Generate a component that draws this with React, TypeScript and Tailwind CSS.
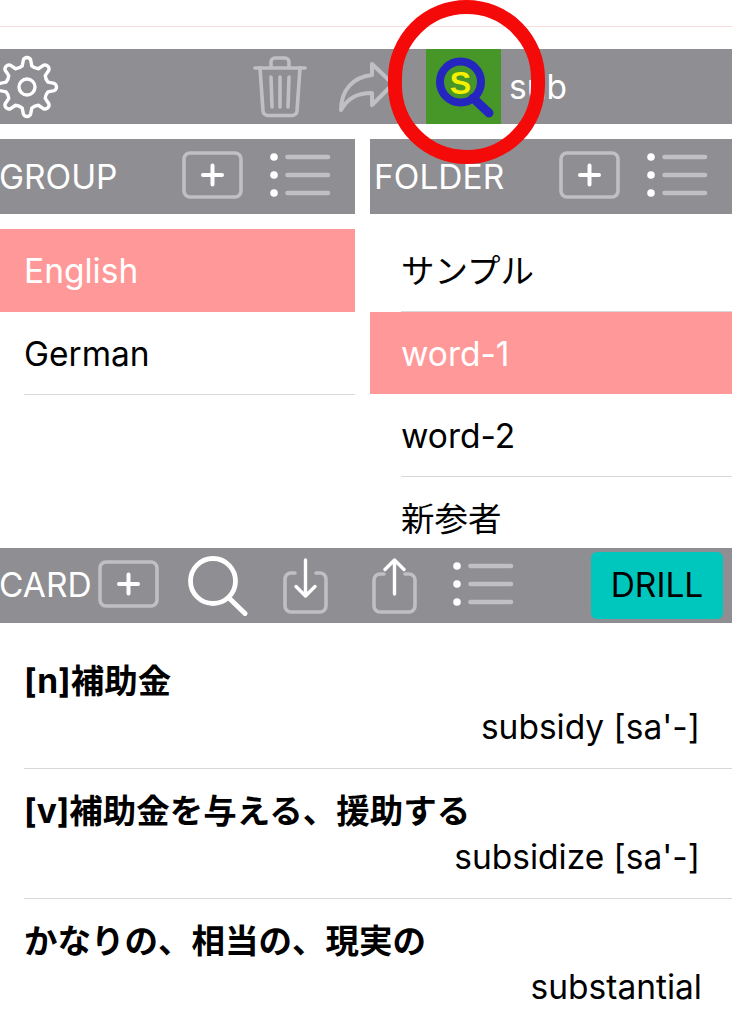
import React from "react";

const FONT = "font-['Inter','Noto_Sans_CJK_JP',sans-serif]";

function PlusBox() {
  return (
    <svg width="62" height="48" viewBox="0 0 62 48" fill="none" className="block shrink-0 -mt-[3px]">
      <rect x="2" y="2" width="57" height="44" rx="6" stroke="#c0c0c4" strokeWidth="3.6" />
      <path d="M30.5 14.5v19M21 24h19" stroke="#fff" strokeWidth="4" strokeLinecap="round" />
    </svg>
  );
}

function ListIcon() {
  return (
    <svg width="64" height="48" viewBox="0 0 64 48" fill="none" className="block shrink-0 -mt-[3px]">
      <circle cx="6" cy="6" r="3.8" fill="#fff" />
      <circle cx="6" cy="24" r="3.8" fill="#fff" />
      <circle cx="6" cy="42" r="3.8" fill="#fff" />
      <path d="M19.500 6h40.500M19.500 24h40.500M19.500 42h40.500" stroke="#c0c0c4" strokeWidth="4.6" strokeLinecap="round" />
    </svg>
  );
}

function gearPath() {
  const pt = (r: number, deg: number) => {
    const a = ((deg - 90) * Math.PI) / 180;
    return `${(r * Math.cos(a)).toFixed(2)} ${(r * Math.sin(a)).toFixed(2)}`;
  };
  let d = "";
  for (let i = 0; i < 8; i++) {
    const a = i * 45;
    d += (i === 0 ? "M" : "L") + pt(21.5, a - 13);
    d += "L" + pt(27.5, a - 7.5);
    d += "Q" + pt(29.5, a - 5) + " " + pt(29.5, a);
    d += "Q" + pt(29.5, a + 5) + " " + pt(27.5, a + 7.5);
    d += "L" + pt(21.5, a + 13);
    d += "Q" + pt(20, a + 22.5) + " " + pt(21.5, a + 32);
  }
  return d + "Z";
}

function Gear() {
  return (
    <svg width="64" height="64" viewBox="-32 -32 64 64" fill="none" className="block shrink-0">
      <path d={gearPath()} stroke="#fff" strokeWidth="3.4" strokeLinejoin="round" />
      <circle cx="0" cy="0" r="8" stroke="#fff" strokeWidth="3.4" />
    </svg>
  );
}

function Trash() {
  return (
    <svg width="54" height="62" viewBox="0 0 54 62" fill="none" stroke="#c0c0c4" strokeWidth="3.6" strokeLinecap="round" strokeLinejoin="round" className="block shrink-0">
      <path d="M2 12h50" />
      <path d="M18 11V6a4 4 0 0 1 4-4h10a4 4 0 0 1 4 4v5" />
      <path d="M7 12l3 43a5 5 0 0 0 5 4.500h24a5 5 0 0 0 5-4.500l3-43" />
      <path d="M18 21l1 30M27 21v30M36 21l-1 30" />
    </svg>
  );
}

function Forward() {
  return (
    <svg width="56" height="52" viewBox="0 0 56 52" fill="none" stroke="#c0c0c4" strokeWidth="4" strokeLinejoin="round" strokeLinecap="round" className="block shrink-0">
      <path d="M2 49c0-20 12-33 31-35V3l21 20-21 21V32C18 32 9 37 2 49z" />
    </svg>
  );
}

function Logo() {
  return (
    <div className="w-[75px] h-[75px] bg-[#469628] shrink-0">
      <svg width="75" height="75" viewBox="0 0 75 75" fill="none" className="block">
        <circle cx="34.500" cy="33" r="20.500" fill="#469628" stroke="#2525c0" strokeWidth="8" />
        <path d="M47 49l16 15" stroke="#2525c0" strokeWidth="9" strokeLinecap="round" />
        <text x="34.500" y="44.500" textAnchor="middle" fontFamily="Liberation Sans" fontWeight="700" fontSize="32" fill="#f5f000">S</text>
      </svg>
    </div>
  );
}

function Search() {
  return (
    <svg width="60" height="60" viewBox="0 0 60 60" fill="none" stroke="#fff" strokeWidth="4.8" strokeLinecap="round" className="block shrink-0">
      <circle cx="25" cy="25" r="22.500" />
      <path d="M41 42l16 15.500" strokeWidth="5" />
    </svg>
  );
}

function Download() {
  return (
    <svg width="45" height="56" viewBox="0 0 45 56" fill="none" strokeLinecap="round" strokeLinejoin="round" className="block shrink-0">
      <path d="M12 15H8a6 6 0 0 0-6 6v27a6 6 0 0 0 6 6h29a6 6 0 0 0 6-6V21a6 6 0 0 0-6-6h-4" stroke="#c0c0c4" strokeWidth="3.6" />
      <path d="M22.500 2v36M13 28.500l9.500 9.500 9.500-9.500" stroke="#fff" strokeWidth="3.4" />
    </svg>
  );
}

function Share() {
  return (
    <svg width="45" height="56" viewBox="0 0 45 56" fill="none" strokeLinecap="round" strokeLinejoin="round" className="block shrink-0">
      <path d="M12 16H8a6 6 0 0 0-6 6v26a6 6 0 0 0 6 6h29a6 6 0 0 0 6-6V22a6 6 0 0 0-6-6h-4" stroke="#c0c0c4" strokeWidth="3.6" />
      <path d="M22.500 36V2M13 11.500L22.500 2l9.500 9.500" stroke="#fff" strokeWidth="3.4" />
    </svg>
  );
}

function GroupRow({ label, selected }: { label: string; selected?: boolean }) {
  return selected ? (
    <div className="h-[83px] pt-[2px] bg-[#ff9999] text-white flex items-center pl-6 text-[33.5px]">{label}</div>
  ) : (
    <div className="h-[83px] pl-6">
      <div className="h-full pt-[2px] flex items-center border-b border-[#d8d8da] text-[33.5px] text-black">{label}</div>
    </div>
  );
}

function FolderRow({ label, selected }: { label: string; selected?: boolean }) {
  return selected ? (
    <div className="h-[82px] pt-[2px] shrink-0 bg-[#ff9999] text-white flex items-center pl-[31px] text-[33.5px]">{label}</div>
  ) : (
    <div className="h-[83px] pl-[31px] shrink-0">
      <div className="h-full pt-[2px] flex items-center border-b border-[#d8d8da] text-[33.5px] text-black">{label}</div>
    </div>
  );
}

function Card({ ja, en, last }: { ja: string; en: string; last?: boolean }) {
  return (
    <div className="ml-6 h-[130px] border-b border-[#d8d8da] flex flex-col pt-[22px]">
      <div className="h-[40px] leading-[40px] text-[33.5px] font-bold text-black whitespace-nowrap">{ja}</div>
      <div className={"h-[40px] mt-[6px] leading-[40px] text-[33.5px] text-black text-right whitespace-nowrap " + (last ? "pr-[30px]" : "pr-[32px]")}>{en}</div>
    </div>
  );
}

export default function App() {
  return (
    <div className={"relative w-[732px] h-[1024px] overflow-hidden bg-white " + FONT}>
      <div className="h-[27px] border-b border-[#fbdcdc]" />
      <div className="mt-[22px] h-[75px] bg-[#8e8e93] flex items-center">
        <div className="-ml-[5px]"><Gear /></div>
        <div className="ml-[194px]"><Trash /></div>
        <div className="ml-[32px]"><Forward /></div>
        <div className="ml-[31px]"><Logo /></div>
        <span className="ml-[8px] pt-[2px] text-[33.5px] text-white leading-none">sub</span>
      </div>
      <div className="mt-[15px] flex gap-[15px]">
        <div className="w-[355px]">
          <div className="h-[75px] bg-[#8e8e93] flex items-center text-[33.5px] text-white">
            <span className="w-[182px] shrink-0 -indent-[1px] pt-[2px]">GROUP</span>
            <PlusBox />
            <div className="ml-[24px]"><ListIcon /></div>
          </div>
          <div className="mt-[15px]">
            <GroupRow label="English" selected />
            <GroupRow label="German" />
          </div>
        </div>
        <div className="w-[362px]">
          <div className="h-[75px] bg-[#8e8e93] flex items-center text-[33.5px] text-white pl-[5px]">
            <span className="w-[184px] shrink-0 -indent-[1px] pt-[2px]">FOLDER</span>
            <PlusBox />
            <div className="ml-[24px]"><ListIcon /></div>
          </div>
          <div className="mt-[15px] h-[319px] overflow-hidden flex flex-col">
            <FolderRow label="サンプル" />
            <FolderRow label="word-1" selected />
            <FolderRow label="word-2" />
            <FolderRow label="新参者" />
          </div>
        </div>
      </div>
      <div className="h-[75px] bg-[#8e8e93] flex items-center text-[33.5px] text-white">
        <span className="w-[98px] shrink-0 -indent-[1px]">CARD</span>
        <PlusBox />
        <div className="ml-[28px]"><Search /></div>
        <div className="ml-[35px]"><Download /></div>
        <div className="ml-[44px]"><Share /></div>
        <div className="ml-[34px]"><ListIcon /></div>
        <div className="ml-[76px] w-[132px] h-[67px] rounded-md bg-[#00c7be] text-black flex items-center justify-center">DRILL</div>
      </div>
      <div className="mt-[16px]">
        <Card ja="[n]補助金" en="subsidy [sa'-]" />
        <Card ja="[v]補助金を与える、援助する" en="subsidize [sa'-]" />
        <Card ja="かなりの、相当の、現実の" en="substantial" last />
      </div>
      <div className="absolute left-[388px] top-0 w-[157px] h-[164px] rounded-full border-[14px] border-[#f50a0a]" />
    </div>
  );
}
